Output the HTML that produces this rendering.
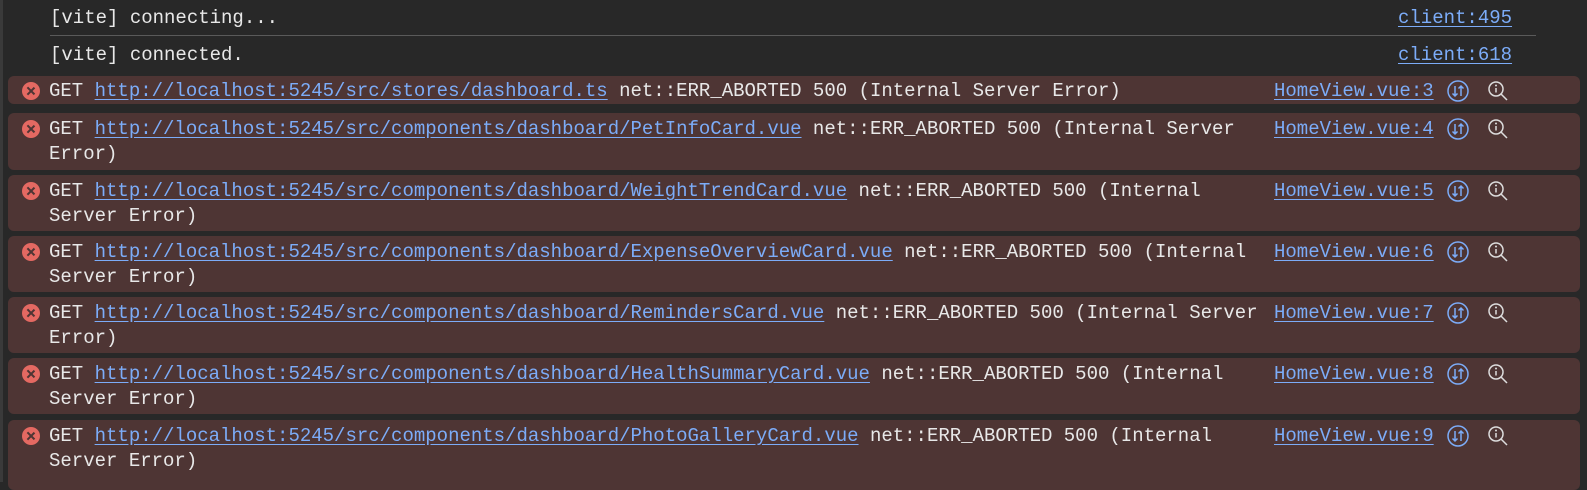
<!DOCTYPE html>
<html><head><meta charset="utf-8"><style>
body{margin:0;width:1587px;height:482px;background:#282828;overflow:hidden;position:relative;font-family:"Liberation Mono",monospace;font-size:19px;color:#e8e8e8}
.edge{position:absolute;left:0;top:0;width:3px;height:482px;background:#3a3a3a}
.t{position:absolute;white-space:pre;line-height:25px}
a{color:#7cacf8;text-decoration:underline;text-underline-offset:3px}
.row{position:absolute;left:8px;width:1572px;background:#4e3534;border-radius:6px}
.x{position:absolute;left:14px;width:18px;height:18px;border-radius:50%;background:#e46962}
.x:before,.x:after{content:"";position:absolute;left:8px;top:4px;width:1.6px;height:10px;background:#4e3534;transform:rotate(45deg)}
.x:after{transform:rotate(-45deg)}
.div{position:absolute;left:50px;top:35px;width:1486px;height:1px;background:#5a5a5a}
svg{position:absolute}
</style></head><body>
<div class="edge"></div>
<div class="t" style="left:50px;top:6px">[vite] connecting...</div>
<div class="t" style="left:1398px;top:6px"><a>client:495</a></div>
<div class="div"></div>
<div class="t" style="left:50px;top:43px">[vite] connected.</div>
<div class="t" style="left:1398px;top:43px"><a>client:618</a></div>

<div class="row" style="top:76px;height:28px"><div class="x" style="top:6px"></div>
<div class="t" style="left:41px;top:3px">GET <a>http://localhost:5245/src/stores/dashboard.ts</a> net::ERR_ABORTED 500 (Internal Server Error)</div></div>

<div class="row" style="top:113px;height:57px"><div class="x" style="top:7px"></div>
<div class="t" style="left:41px;top:4px">GET <a>http://localhost:5245/src/components/dashboard/PetInfoCard.vue</a> net::ERR_ABORTED 500 (Internal Server
Error)</div></div>

<div class="row" style="top:175px;height:56px"><div class="x" style="top:7px"></div>
<div class="t" style="left:41px;top:4px">GET <a>http://localhost:5245/src/components/dashboard/WeightTrendCard.vue</a> net::ERR_ABORTED 500 (Internal
Server Error)</div></div>

<div class="row" style="top:236px;height:56px"><div class="x" style="top:7px"></div>
<div class="t" style="left:41px;top:4px">GET <a>http://localhost:5245/src/components/dashboard/ExpenseOverviewCard.vue</a> net::ERR_ABORTED 500 (Internal
Server Error)</div></div>

<div class="row" style="top:297px;height:56px"><div class="x" style="top:7px"></div>
<div class="t" style="left:41px;top:4px">GET <a>http://localhost:5245/src/components/dashboard/RemindersCard.vue</a> net::ERR_ABORTED 500 (Internal Server
Error)</div></div>

<div class="row" style="top:358px;height:56px"><div class="x" style="top:7px"></div>
<div class="t" style="left:41px;top:4px">GET <a>http://localhost:5245/src/components/dashboard/HealthSummaryCard.vue</a> net::ERR_ABORTED 500 (Internal
Server Error)</div></div>

<div class="row" style="top:420px;height:70px"><div class="x" style="top:7px"></div>
<div class="t" style="left:41px;top:4px">GET <a>http://localhost:5245/src/components/dashboard/PhotoGalleryCard.vue</a> net::ERR_ABORTED 500 (Internal
Server Error)</div></div>

<div id="links"></div>
<script>
var tops=[79,117,179,240,301,362,424];
var h='';
tops.forEach(function(t,i){
h+='<div class="t" style="left:1274px;top:'+t+'px"><a>HomeView.vue:'+(i+3)+'</a></div>';
var y=t+12;
h+='<svg style="left:1446px;top:'+(y-12)+'px" width="24" height="24" viewBox="0 0 24 24"><circle cx="12" cy="12" r="10" fill="none" stroke="#7cacf8" stroke-width="1.5"/><path d="M9 7v10M6.5 14.5L9 17l2.5-2.5M15 17V7M12.5 9.5L15 7l2.5 2.5" fill="none" stroke="#7cacf8" stroke-width="1.5"/></svg>';
h+='<svg style="left:1486px;top:'+(y-12)+'px" width="24" height="24" viewBox="0 0 24 24"><circle cx="10" cy="10" r="7" fill="none" stroke="#ddd" stroke-width="1.5"/><path d="M15 15L21 21M10 9v4.5" stroke="#ddd" stroke-width="1.5"/><circle cx="10" cy="6.5" r="1" fill="#ddd"/></svg>';
});
document.getElementById('links').innerHTML=h;
</script>
</body></html>
